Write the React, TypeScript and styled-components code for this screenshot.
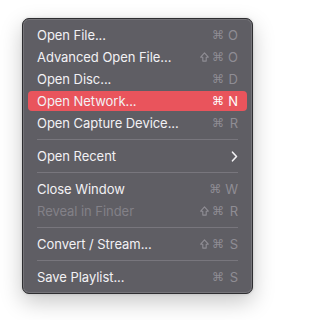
import styled, { createGlobalStyle } from "styled-components"

const Global = createGlobalStyle`
  html, body {
    margin: 0;
    padding: 0;
    background: #ffffff;
  }
  body {
    font-family: "Inter", "Liberation Sans", "DejaVu Sans", sans-serif;
    -webkit-font-smoothing: antialiased;
  }
`

const Page = styled.div`
  width: 275px;
  height: 320px;
  padding: 18px 0 0 22px;
  box-sizing: border-box;
`

const Menu = styled.div`
  width: 231px;
  box-sizing: border-box;
  padding: 5px 0;
  background: #5f5e64;
  border: 1px solid #2e2e31;
  border-radius: 7px;
  box-shadow:
    inset 0 0 0 1px rgba(255, 255, 255, 0.14),
    0 8px 22px rgba(0, 0, 0, 0.22),
    0 0 3px rgba(0, 0, 0, 0.15);
  display: flex;
  flex-direction: column;
`

const Item = styled.div<{ $active?: boolean }>`
  height: 20px;
  margin: 1px 5px;
  padding: 0 9px;
  border-radius: 4px;
  display: flex;
  align-items: center;
  justify-content: space-between;
  background: ${(p) => (p.$active ? "#e9545c" : "transparent")};
`

const Label = styled.span<{ $disabled?: boolean }>`
  font-size: 13px;
  letter-spacing: -0.05px;
  color: ${(p) => (p.$disabled ? "#838188" : "#f2f1f4")};
`

const Keys = styled.span<{ $active?: boolean }>`
  font-family: "DejaVu Sans", "Inter", sans-serif;
  font-size: 12px;
  color: ${(p) => (p.$active ? "#ffffff" : "#8f8d94")};
  display: flex;
  align-items: center;
  gap: 4px;
`

const Letter = styled.span`
  font-family: "Inter", "Liberation Sans", sans-serif;
  font-size: 13px;
  min-width: 10px;
  text-align: right;
`

const Separator = styled.div`
  height: 1px;
  margin: 5px 14px 5px 14px;
  background: #78767d;
`

const Chevron = () => (
  <svg width="7" height="11" viewBox="0 0 7 11" fill="none">
    <path d="M1.5 1.2 L5.5 5.5 L1.5 9.8" stroke="#f2f1f4" strokeWidth="1.6" strokeLinecap="round" strokeLinejoin="round" />
  </svg>
)

const Shift = () => (
  <svg width="9" height="10" viewBox="0 0 9 10" fill="none" style={{ marginRight: -1 }}>
    <path
      d="M4.5 0.9 L8.3 5.2 H6.2 V9.1 H2.8 V5.2 H0.7 Z"
      stroke="currentColor"
      strokeWidth="1.1"
      strokeLinejoin="round"
    />
  </svg>
)

type Entry =
  | { kind: "sep" }
  | { kind: "item"; label: string; shift?: boolean; key?: string; active?: boolean; disabled?: boolean; sub?: boolean }

const entries: Entry[] = [
  { kind: "item", label: "Open File...", key: "O" },
  { kind: "item", label: "Advanced Open File...", shift: true, key: "O" },
  { kind: "item", label: "Open Disc...", key: "D" },
  { kind: "item", label: "Open Network...", key: "N", active: true },
  { kind: "item", label: "Open Capture Device...", key: "R" },
  { kind: "sep" },
  { kind: "item", label: "Open Recent", sub: true },
  { kind: "sep" },
  { kind: "item", label: "Close Window", key: "W" },
  { kind: "item", label: "Reveal in Finder", shift: true, key: "R", disabled: true },
  { kind: "sep" },
  { kind: "item", label: "Convert / Stream...", shift: true, key: "S" },
  { kind: "sep" },
  { kind: "item", label: "Save Playlist...", key: "S" },
]

export default function App() {
  return (
    <Page>
      <Global />
      <Menu>
        {entries.map((e, i) =>
          e.kind === "sep" ? (
            <Separator key={i} />
          ) : (
            <Item key={i} $active={e.active}>
              <Label $disabled={e.disabled}>{e.label}</Label>
              {e.sub ? (
                <Chevron />
              ) : (
                <Keys $active={e.active}>
                  {e.shift && <Shift />}
                  <span>⌘</span>
                  <Letter>{e.key}</Letter>
                </Keys>
              )}
            </Item>
          )
        )}
      </Menu>
    </Page>
  )
}
